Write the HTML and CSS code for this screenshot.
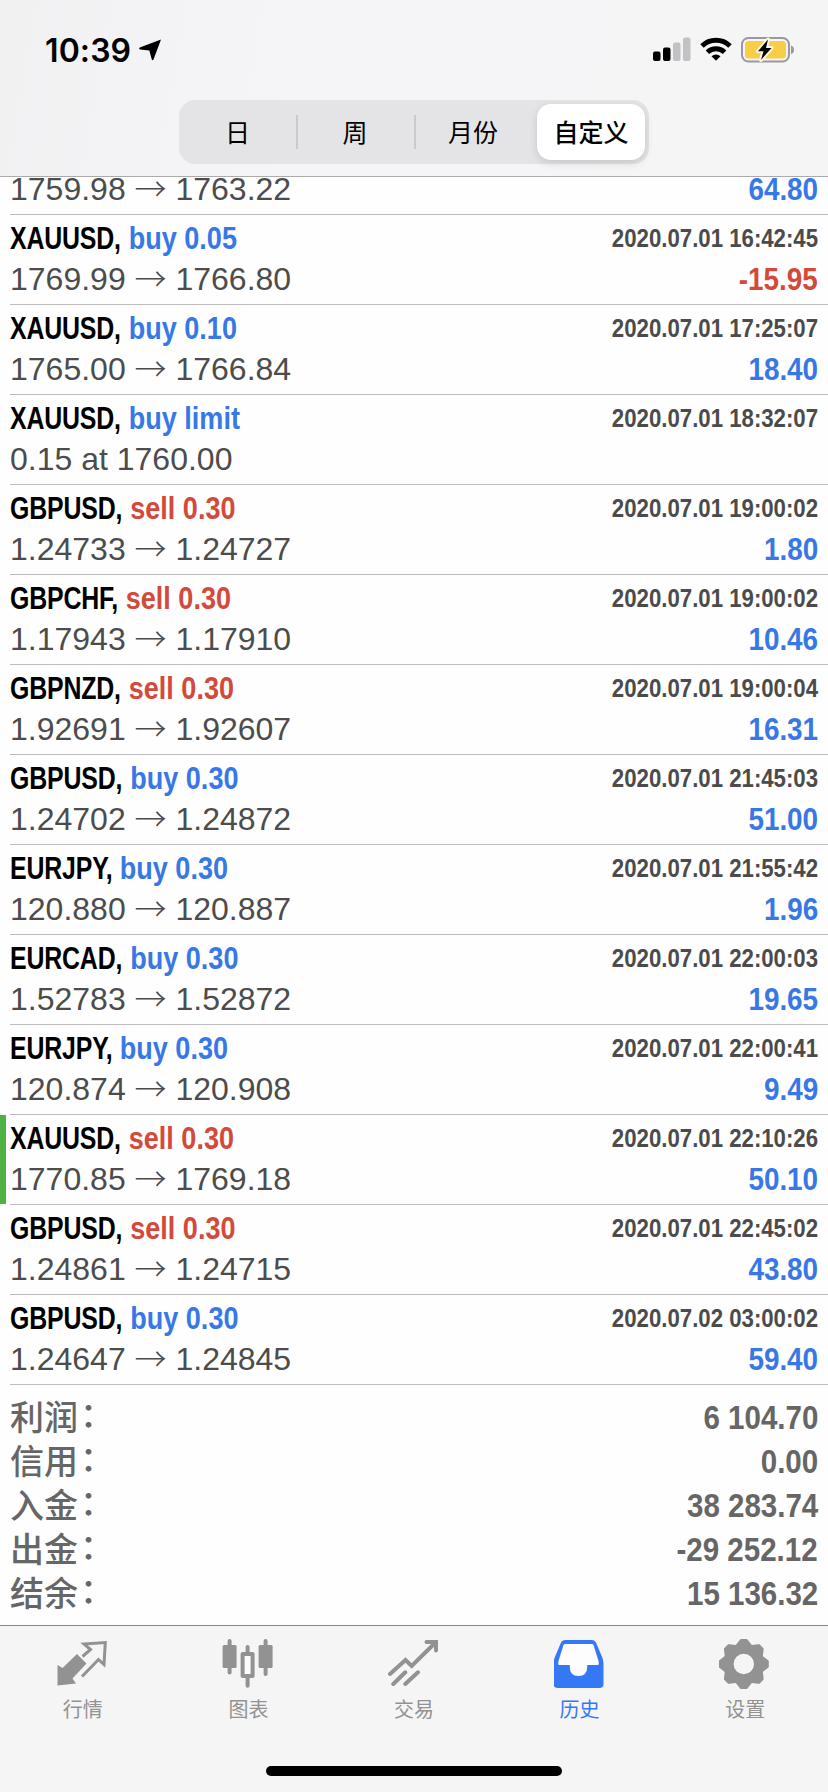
FILE: index.html
```html
<!DOCTYPE html>
<html lang="zh-CN">
<head>
<meta charset="utf-8">
<title>历史</title>
<link rel="stylesheet" href="styles.css">
</head>
<body>
<div class="screen">
  <header class="header">
    <div class="status">
      <div class="clock">10:39
        <svg class="location" width="22" height="22" viewBox="0 0 22 22"><path d="M22 0.500 L0.800 8.600 Q-0.500 9.500 1 10.500 L10.300 11.500 L12.800 20.500 Q13.500 22 14.500 20.500 Z"/></svg>
      </div>
      <div class="indicators">
        <svg width="38" height="24" viewBox="0 0 38 24"><rect x="0" y="14.500" width="7.500" height="9.500" rx="2"/><rect x="10" y="10.500" width="7.500" height="13.500" rx="2"/><rect x="20" y="5.500" width="7.500" height="18.500" rx="2" fill="#c2c2c4"/><rect x="30" y="0.500" width="7.500" height="23.500" rx="2" fill="#c2c2c4"/></svg>
        <svg width="32" height="24" viewBox="0 0 32 24"><g fill="none" stroke="#000" stroke-width="5"><path d="M2 9 A20 20 0 0 1 30 9"/><path d="M7.400 15.200 A12.500 12.500 0 0 1 24.600 15.200"/></g><path d="M11.500 19.200 A7 7 0 0 1 20.500 19.200 L16 23.800 Z"/></svg>
        <svg width="54" height="26" viewBox="0 0 54 26"><rect x="1" y="1" width="47" height="23.500" rx="6.500" fill="none" stroke="#9a97a2" stroke-width="2"/><rect x="4" y="4" width="41" height="17.500" rx="3.500" fill="#f7ce46"/><path d="M50 8.500 Q53 9.500 53 12.700 Q53 16 50 17 Z" fill="#9a97a2"/><path d="M27 2.500 L17 14.300 H22.500 L20 23 L30.500 11 H25 Z" stroke="#fdf6dc" stroke-width="4" stroke-linejoin="round" paint-order="stroke"/></svg>
      </div>
    </div>
    <nav class="segments">
      <div class="segment">日</div>
      <div class="segment">周</div>
      <div class="segment">月份</div>
      <div class="segment selected">自定义</div>
    </nav>
  </header>

  <main class="history">
    <div class="deal"><div class="line"></div><div class="line second"><span class="prices">1759.98 <i>→</i> 1763.22</span><span class="profit buy">64.80</span></div></div>
    <div class="deal"><div class="line"><span class="order"><b>XAUUSD,</b> <span class="buy">buy 0.05</span></span><time>2020.07.01 16:42:45</time></div><div class="line second"><span class="prices">1769.99 <i>→</i> 1766.80</span><span class="profit sell">-15.95</span></div></div>
    <div class="deal"><div class="line"><span class="order"><b>XAUUSD,</b> <span class="buy">buy 0.10</span></span><time>2020.07.01 17:25:07</time></div><div class="line second"><span class="prices">1765.00 <i>→</i> 1766.84</span><span class="profit buy">18.40</span></div></div>
    <div class="deal"><div class="line"><span class="order"><b>XAUUSD,</b> <span class="buy">buy limit</span></span><time>2020.07.01 18:32:07</time></div><div class="line second"><span class="prices">0.15 at 1760.00</span></div></div>
    <div class="deal"><div class="line"><span class="order"><b>GBPUSD,</b> <span class="sell">sell 0.30</span></span><time>2020.07.01 19:00:02</time></div><div class="line second"><span class="prices">1.24733 <i>→</i> 1.24727</span><span class="profit buy">1.80</span></div></div>
    <div class="deal"><div class="line"><span class="order"><b>GBPCHF,</b> <span class="sell">sell 0.30</span></span><time>2020.07.01 19:00:02</time></div><div class="line second"><span class="prices">1.17943 <i>→</i> 1.17910</span><span class="profit buy">10.46</span></div></div>
    <div class="deal"><div class="line"><span class="order"><b>GBPNZD,</b> <span class="sell">sell 0.30</span></span><time>2020.07.01 19:00:04</time></div><div class="line second"><span class="prices">1.92691 <i>→</i> 1.92607</span><span class="profit buy">16.31</span></div></div>
    <div class="deal"><div class="line"><span class="order"><b>GBPUSD,</b> <span class="buy">buy 0.30</span></span><time>2020.07.01 21:45:03</time></div><div class="line second"><span class="prices">1.24702 <i>→</i> 1.24872</span><span class="profit buy">51.00</span></div></div>
    <div class="deal"><div class="line"><span class="order"><b>EURJPY,</b> <span class="buy">buy 0.30</span></span><time>2020.07.01 21:55:42</time></div><div class="line second"><span class="prices">120.880 <i>→</i> 120.887</span><span class="profit buy">1.96</span></div></div>
    <div class="deal"><div class="line"><span class="order"><b>EURCAD,</b> <span class="buy">buy 0.30</span></span><time>2020.07.01 22:00:03</time></div><div class="line second"><span class="prices">1.52783 <i>→</i> 1.52872</span><span class="profit buy">19.65</span></div></div>
    <div class="deal"><div class="line"><span class="order"><b>EURJPY,</b> <span class="buy">buy 0.30</span></span><time>2020.07.01 22:00:41</time></div><div class="line second"><span class="prices">120.874 <i>→</i> 120.908</span><span class="profit buy">9.49</span></div></div>
    <div class="deal marked"><div class="line"><span class="order"><b>XAUUSD,</b> <span class="sell">sell 0.30</span></span><time>2020.07.01 22:10:26</time></div><div class="line second"><span class="prices">1770.85 <i>→</i> 1769.18</span><span class="profit buy">50.10</span></div></div>
    <div class="deal"><div class="line"><span class="order"><b>GBPUSD,</b> <span class="sell">sell 0.30</span></span><time>2020.07.01 22:45:02</time></div><div class="line second"><span class="prices">1.24861 <i>→</i> 1.24715</span><span class="profit buy">43.80</span></div></div>
    <div class="deal"><div class="line"><span class="order"><b>GBPUSD,</b> <span class="buy">buy 0.30</span></span><time>2020.07.02 03:00:02</time></div><div class="line second"><span class="prices">1.24647 <i>→</i> 1.24845</span><span class="profit buy">59.40</span></div></div>

    <dl class="totals">
      <div><dt>利润<span>：</span></dt><dd>6 104.70</dd></div>
      <div><dt>信用<span>：</span></dt><dd>0.00</dd></div>
      <div><dt>入金<span>：</span></dt><dd>38 283.74</dd></div>
      <div><dt>出金<span>：</span></dt><dd>-29 252.12</dd></div>
      <div><dt>结余<span>：</span></dt><dd>15 136.32</dd></div>
    </dl>
  </main>

  <footer class="footer">
    <nav class="tabs">
      <div class="tab"><svg width="52" height="52" viewBox="0 0 52 52"><path d="M0.500 27 L5.500 30 L20 16 L29.500 25.500 L15.500 40.500 L19 45.500 L0.500 47.500 Z"/><path d="M25.500 18.500 L33.500 11.500 L27 6 L48.300 4.500 L47 26.500 L41.500 21.500 L25 38.500" fill="none" stroke="currentColor" stroke-width="3"/></svg>行情</div>
      <div class="tab"><svg width="52" height="52" viewBox="0 0 52 52"><rect x="0.600" y="7" width="14" height="23" rx="1.500"/><rect x="5.600" y="1" width="4" height="35.500" rx="2"/><rect x="36.600" y="7" width="14" height="23" rx="1.500"/><rect x="41.600" y="1" width="4" height="37" rx="2"/><path d="M25.600 9 V14 M25.600 40 V47.700" stroke="currentColor" stroke-width="4" stroke-linecap="round"/><rect x="20.600" y="16" width="10" height="22" fill="#fcfcfc" stroke="currentColor" stroke-width="4" stroke-linejoin="round"/></svg>图表</div>
      <div class="tab"><svg width="52" height="52" viewBox="0 0 52 52"><path d="M2 36 L17.500 22 L23.700 28 L48 4 M38.500 4 H48 V12.500 M5.300 46 L17.300 34.300 M17.300 46 L30 34.300" fill="none" stroke="currentColor" stroke-width="4" stroke-linecap="round"/></svg>交易</div>
      <div class="tab active"><svg width="52" height="52" viewBox="1.500 0 52 52"><path fill-rule="evenodd" d="M13 2 H39 Q42.500 2 43.700 5 L50 20 Q51 23 51 26 V46 Q51 50 47 50 H5 Q1 50 1 46 V26 Q1 23 2 20 L8.300 5 Q9.500 2 13 2 Z"/><path d="M12.500 6 H39.500 Q40.500 6 41 7 L46 23 Q46.700 27 45.500 27 H34.700 V29 Q34.700 38 26 38 Q17.300 38 17.300 29 V27 H6.500 Q5.300 27 6 23 L11 7 Q11.500 6 12.500 6 Z" fill="#fdfdfd"/></svg>历史</div>
      <div class="tab"><svg width="52" height="52" viewBox="1.200 0 52 52"><g stroke="currentColor" stroke-width="3" stroke-linejoin="round"><g id="teeth"><path id="tooth" d="M18 9.500 L23.500 2.500 H28.500 L34 9.500 L30 13 H22 Z"/><use href="#tooth" transform="rotate(45 26 26)"/><use href="#tooth" transform="rotate(90 26 26)"/><use href="#tooth" transform="rotate(135 26 26)"/></g><use href="#teeth" transform="rotate(180 26 26)"/></g><circle cx="26" cy="26" r="14.700" fill="none" stroke="currentColor" stroke-width="9"/></svg>设置</div>
    </nav>
    <div class="home"></div>
  </footer>
</div>
</body>
</html>
```
FILE: styles.css
```css
* { box-sizing: border-box; }
body { margin: 0; background: #fefefe; font-family: "Liberation Sans", "Noto Sans CJK SC", sans-serif; }
.screen { display: flex; flex-direction: column; width: 828px; height: 1792px; overflow: hidden; }
.header { flex: none; height: 177px; background: linear-gradient(100deg, #f1f1f2, #f5f5f8 35%, #f5f5f6); border-bottom: 1px solid #ababab; }
.status { display: flex; justify-content: space-between; height: 100px; padding: 37px 33px 0 45px; }
.clock { display: flex; gap: 8px; height: 26px; font: 600 32px/27px Inter, sans-serif; letter-spacing: 0.1px; }
.location { margin-top: 2px; }
.indicators { display: flex; gap: 9px; }
.segments { display: grid; grid-template-columns: 117px 118px 123px 1fr; width: 470px; height: 64px; margin-left: 179px; border-radius: 16px; background: #e4e4e6; font: 25px/54px "Noto Sans CJK SC", sans-serif; text-align: center; padding: 4px 4px 4px 0; }
.segment { position: relative; }
.segment:nth-child(3) { padding-right: 5px; }
.segment + .segment:not(.selected)::before { content: ""; position: absolute; left: 0; top: 11px; width: 2px; height: 34px; background: #cacacc; }
.selected { background: #fff; border-radius: 14px; font-weight: 500; box-shadow: 0 3px 8px rgba(0, 0, 0, .13); }
.history { flex: 1; display: flex; flex-direction: column; justify-content: flex-end; min-height: 0; overflow: hidden; }
.deal { position: relative; flex: none; height: 90px; padding: 4px 10px 0; }
.deal::after { content: ""; position: absolute; left: 10px; right: 0; bottom: 0; height: 1px; background: #bdbdbd; }
.marked::before { content: ""; position: absolute; left: 0; top: 0; bottom: 1px; width: 6px; background: #4eb143; }
.line { display: flex; justify-content: space-between; height: 39px; line-height: 39px; white-space: nowrap; }
.second { height: 42px; line-height: 42px; }
.order { font-size: 32px; font-weight: 700; transform: scaleX(.845); transform-origin: left; }
.order b { display: inline-block; margin-right: -11px; letter-spacing: -0.2px; transform: scaleX(.92); transform-origin: left; }
time { font-size: 26.5px; font-weight: 700; color: #4b4b4b; transform: scaleX(.838); transform-origin: right; }
.prices { font-size: 32px; color: #4c4c4c; }
.prices i { position: relative; top: 1px; font-family: "Noto Sans CJK SC", sans-serif; font-style: normal; font-weight: 300; line-height: 1; }
.profit { font-size: 32px; line-height: 43px; font-weight: 700; transform: scaleX(.87); transform-origin: right; }
.buy { color: #3878e6; }
.sell { color: #d34a3a; }
.totals { flex: none; height: 240px; margin: 0; padding: 10px 10px 0; color: #666; }
.totals div { display: flex; justify-content: space-between; height: 44px; line-height: 44px; }
dt { font: 500 34px/42px "Noto Sans CJK SC", sans-serif; }
dt span { position: relative; top: -3px; left: 2px; }
dd { margin: 0; font-size: 34px; font-weight: 700; transform: scaleX(.868); transform-origin: right; }
.footer { flex: none; height: 167px; border-top: 1px solid #868686; background: #f5f5f5; }
.tabs { display: grid; grid-template-columns: repeat(5, 1fr); height: 140px; padding-top: 12px; }
.tab { display: flex; flex-direction: column; align-items: center; font: 20px/32px "Noto Sans CJK SC", sans-serif; gap: 3px; color: #929292; }
svg { display: block; flex: none; }
.tab svg { fill: currentColor; }
.active { color: #3478f6; }
.home { width: 296px; height: 10px; border-radius: 5px; margin: 0 auto; background: #000; }
```
